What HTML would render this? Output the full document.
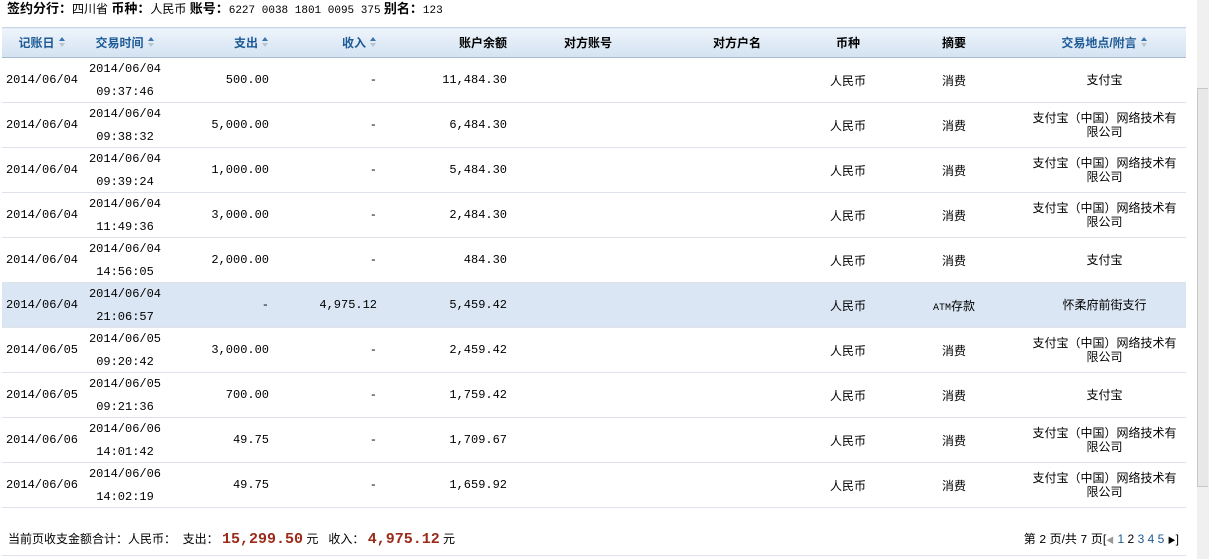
<!DOCTYPE html>
<html><head><meta charset="utf-8"><style>
body{margin:0;width:1209px;height:559px;overflow:hidden;background:#fff;font-family:"Liberation Sans","Noto Sans CJK SC",sans-serif;font-size:12px;color:#000;position:relative}
.mono{font-family:"Liberation Mono","Noto Sans CJK SC",monospace}
#top{position:absolute;left:7px;top:0;height:18px;line-height:17px;font-size:12px}
#top b{font-size:13px}
table{position:absolute;left:2px;top:27px;border-collapse:collapse;table-layout:fixed;width:1184px}
th{height:29px;padding:0;background:linear-gradient(#eef4fb,#d3e2f1);border-top:1px solid #c9d8e8;border-bottom:1px solid #a9bccf;font-weight:bold;font-size:12px;color:#000}
th.s{color:#1d5a95}
td{height:44px;padding:0;border-bottom:1px solid #dde3e8;font-size:12px;overflow:visible}
.c{text-align:center}.r{text-align:right;padding-right:6px}
.dt{height:44px;line-height:23px;overflow:visible}
.loc{line-height:14px}
tr.hl td{background:#dae6f3}
.ar{display:inline-block;width:7px;height:11px;vertical-align:-1px;margin-left:4px;position:relative}
.ar:before{content:"";position:absolute;left:0;top:0;border:3.5px solid transparent;border-bottom:4px solid #3a74b0;border-top:0}
.ar:after{content:"";position:absolute;left:0;top:6px;border:3.5px solid transparent;border-top:4px solid #b8c4d0;border-bottom:0}
#foot{position:absolute;left:8px;top:530px;font-size:12px;line-height:18px}
#foot .n{color:#9b2a1a;font-weight:bold;font-size:15px;font-family:"Liberation Mono",monospace}
#pg{position:absolute;right:30px;top:530px;line-height:18px}
#pg a{color:#1d5a95;text-decoration:none}
#line{position:absolute;left:2px;top:555px;width:1184px;border-top:1px solid #dde3e8}
#sb{position:absolute;left:1197px;top:0;width:12px;height:559px;background:#f0f0f0}
#th{position:absolute;left:1197px;top:88px;width:11px;height:399px;background:#e8e8e8;border:1px solid #c8c8c8;border-right:0;box-sizing:border-box}
</style></head><body>
<div id="top"><b>签约分行：</b>四川省 <b>币种：</b>人民币 <b>账号：</b><span class="mono" style="font-size:11px">6227 0038 1801 0095 375</span> <b>别名：</b><span class="mono" style="font-size:11px">123</span></div>
<table>
<colgroup><col style="width:80px"><col style="width:86px"><col style="width:107px"><col style="width:108px"><col style="width:130px"><col style="width:150px"><col style="width:148px"><col style="width:74px"><col style="width:138px"><col style="width:163px"></colgroup>
<tr><th class="s c">记账日<span class="ar"></span></th><th class="s c">交易时间<span class="ar"></span></th><th class="s r">支出<span class="ar"></span></th><th class="s r">收入<span class="ar"></span></th><th class="r">账户余额</th><th class="c">对方账号</th><th class="c">对方户名</th><th class="c">币种</th><th class="c">摘要</th><th class="s c">交易地点/附言<span class="ar"></span></th></tr>
<tr><td class="c mono">2014/06/04</td><td class="c mono"><div class="dt">2014/06/04<br>09:37:46</div></td><td class="r mono">500.00</td><td class="r mono">-</td><td class="r mono">11,484.30</td><td></td><td></td><td class="c">人民币</td><td class="c">消费</td><td class="c loc">支付宝</td></tr>
<tr><td class="c mono">2014/06/04</td><td class="c mono"><div class="dt">2014/06/04<br>09:38:32</div></td><td class="r mono">5,000.00</td><td class="r mono">-</td><td class="r mono">6,484.30</td><td></td><td></td><td class="c">人民币</td><td class="c">消费</td><td class="c loc">支付宝（中国）网络技术有<br>限公司</td></tr>
<tr><td class="c mono">2014/06/04</td><td class="c mono"><div class="dt">2014/06/04<br>09:39:24</div></td><td class="r mono">1,000.00</td><td class="r mono">-</td><td class="r mono">5,484.30</td><td></td><td></td><td class="c">人民币</td><td class="c">消费</td><td class="c loc">支付宝（中国）网络技术有<br>限公司</td></tr>
<tr><td class="c mono">2014/06/04</td><td class="c mono"><div class="dt">2014/06/04<br>11:49:36</div></td><td class="r mono">3,000.00</td><td class="r mono">-</td><td class="r mono">2,484.30</td><td></td><td></td><td class="c">人民币</td><td class="c">消费</td><td class="c loc">支付宝（中国）网络技术有<br>限公司</td></tr>
<tr><td class="c mono">2014/06/04</td><td class="c mono"><div class="dt">2014/06/04<br>14:56:05</div></td><td class="r mono">2,000.00</td><td class="r mono">-</td><td class="r mono">484.30</td><td></td><td></td><td class="c">人民币</td><td class="c">消费</td><td class="c loc">支付宝</td></tr>
<tr class="hl"><td class="c mono">2014/06/04</td><td class="c mono"><div class="dt">2014/06/04<br>21:06:57</div></td><td class="r mono">-</td><td class="r mono">4,975.12</td><td class="r mono">5,459.42</td><td></td><td></td><td class="c">人民币</td><td class="c"><span class="mono" style="font-size:10px">ATM</span>存款</td><td class="c loc">怀柔府前街支行</td></tr>
<tr><td class="c mono">2014/06/05</td><td class="c mono"><div class="dt">2014/06/05<br>09:20:42</div></td><td class="r mono">3,000.00</td><td class="r mono">-</td><td class="r mono">2,459.42</td><td></td><td></td><td class="c">人民币</td><td class="c">消费</td><td class="c loc">支付宝（中国）网络技术有<br>限公司</td></tr>
<tr><td class="c mono">2014/06/05</td><td class="c mono"><div class="dt">2014/06/05<br>09:21:36</div></td><td class="r mono">700.00</td><td class="r mono">-</td><td class="r mono">1,759.42</td><td></td><td></td><td class="c">人民币</td><td class="c">消费</td><td class="c loc">支付宝</td></tr>
<tr><td class="c mono">2014/06/06</td><td class="c mono"><div class="dt">2014/06/06<br>14:01:42</div></td><td class="r mono">49.75</td><td class="r mono">-</td><td class="r mono">1,709.67</td><td></td><td></td><td class="c">人民币</td><td class="c">消费</td><td class="c loc">支付宝（中国）网络技术有<br>限公司</td></tr>
<tr><td class="c mono">2014/06/06</td><td class="c mono"><div class="dt">2014/06/06<br>14:02:19</div></td><td class="r mono">49.75</td><td class="r mono">-</td><td class="r mono">1,659.92</td><td></td><td></td><td class="c">人民币</td><td class="c">消费</td><td class="c loc">支付宝（中国）网络技术有<br>限公司</td></tr>
</table>
<div id="foot">当前页收支金额合计：人民币： &nbsp;支出： <span class="n">15,299.50</span> 元 &nbsp; 收入： <span class="n">4,975.12</span> 元</div>
<div id="pg">第 <span class="mono">2</span> 页/共 <span class="mono">7</span> 页[<span style="color:#999;font-size:8px">◀</span> <a>1</a> <span>2</span> <a>3</a> <a>4</a> <a>5</a> <span style="font-size:8px">▶</span>]</div>
<div id="line"></div>
<div id="sb"></div><div id="th"></div>
</body></html>
